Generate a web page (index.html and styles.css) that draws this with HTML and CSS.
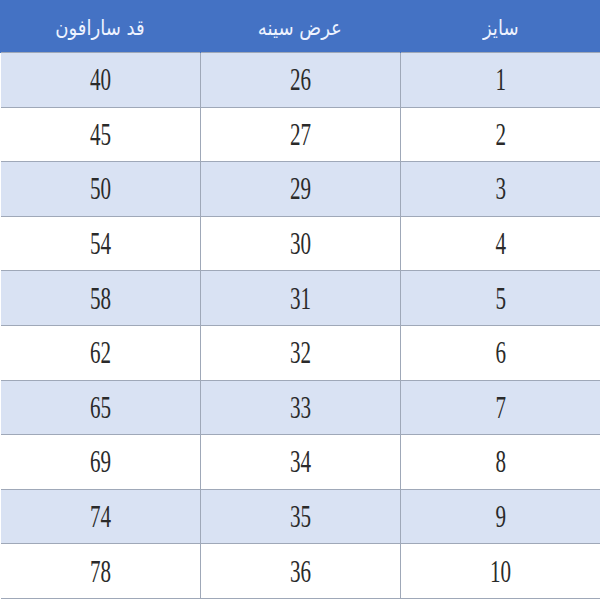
FILE: index.html
```html
<!DOCTYPE html>
<html lang="fa" dir="rtl">
<head>
<meta charset="utf-8">
<link rel="stylesheet" href="styles.css">
</head>
<body>
<table class="size-table">
  <thead>
    <tr><th><span class="hd">سایز</span></th><th><span class="hd">عرض سینه</span></th><th><span class="hd">قد سارافون</span></th></tr>
  </thead>
  <tbody>
    <tr class="odd"><td><span class="num">1</span></td><td><span class="num">26</span></td><td><span class="num">40</span></td></tr>
    <tr><td><span class="num">2</span></td><td><span class="num">27</span></td><td><span class="num">45</span></td></tr>
    <tr class="odd"><td><span class="num">3</span></td><td><span class="num">29</span></td><td><span class="num">50</span></td></tr>
    <tr><td><span class="num">4</span></td><td><span class="num">30</span></td><td><span class="num">54</span></td></tr>
    <tr class="odd"><td><span class="num">5</span></td><td><span class="num">31</span></td><td><span class="num">58</span></td></tr>
    <tr><td><span class="num">6</span></td><td><span class="num">32</span></td><td><span class="num">62</span></td></tr>
    <tr class="odd"><td><span class="num">7</span></td><td><span class="num">33</span></td><td><span class="num">65</span></td></tr>
    <tr><td><span class="num">8</span></td><td><span class="num">34</span></td><td><span class="num">69</span></td></tr>
    <tr class="odd"><td><span class="num">9</span></td><td><span class="num">35</span></td><td><span class="num">74</span></td></tr>
    <tr><td><span class="num">10</span></td><td><span class="num">36</span></td><td><span class="num">78</span></td></tr>
  </tbody>
</table>
</body>
</html>
```

FILE: styles.css
```css
html, body {
  margin: 0;
  padding: 0;
  background: #ffffff;
}
.size-table {
  width: 600px;
  table-layout: fixed;
  border-collapse: collapse;
}
.size-table th {
  height: 47px;
  padding: 5px 0 0 0;
  background: #4472c4;
  color: #eef3ff;
  font-family: "DejaVu Sans", sans-serif;
  font-weight: normal;
  font-size: 21px;
  line-height: 1;
  text-align: center;
  vertical-align: middle;
  border-left: 1px solid #4472c4;
}
.hd {
  display: inline-block;
  transform: scaleX(0.86);
}
.size-table td {
  height: 53.6px;
  padding: 0;
  border: 1px solid #9fa8b8;
  font-family: "Liberation Serif", "Times New Roman", serif;
  font-size: 31px;
  line-height: 1;
  color: #2a2a2a;
  text-align: center;
  vertical-align: middle;
  background: #ffffff;
}
.num {
  display: inline-block;
  transform: scaleX(0.68);
}
.size-table tr.odd td {
  background: #d9e2f3;
}
.size-table td:first-child { border-right: none; }
.size-table td:last-child { border-left: none; }
```
